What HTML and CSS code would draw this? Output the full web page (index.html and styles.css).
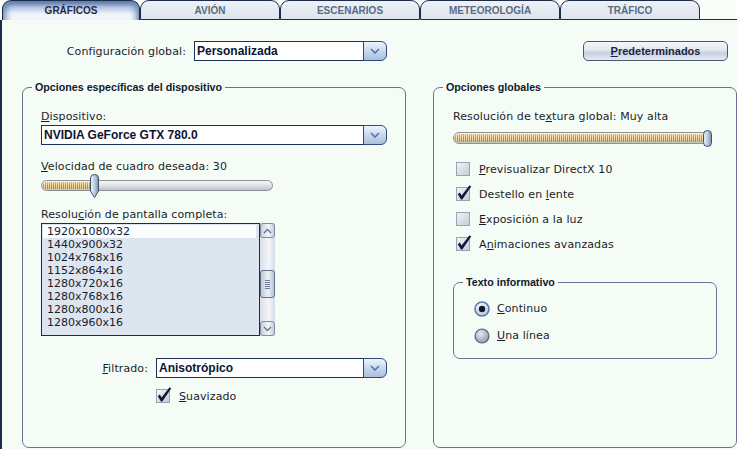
FILE: index.html
```html
<!DOCTYPE html>
<html lang="es">
<head>
    <meta charset="UTF-8">
    <title>Gráficos</title>
    <link rel="stylesheet" href="styles.css">
</head>
<body>

<div class="window">
    <!-- Tabs -->
    <div class="tabs">
        <div class="tab active">GRÁFICOS</div>
        <div class="tab">AVIÓN</div>
        <div class="tab">ESCENARIOS</div>
        <div class="tab">METEOROLOGÍA</div>
        <div class="tab">TRÁFICO</div>
        <div class="tab-fill"></div>
    </div>

    <div class="panel">
        <!-- Global config row -->
        <div class="top-row">
            <label class="top-label">Configuración <u>g</u>lobal:</label>
            <div class="combo combo-global">
                <span class="combo-value">Personalizada</span>
                <span class="combo-btn"><svg width="10" height="6" viewBox="0 0 10 6"><path d="M1 1 L5 5 L9 1" fill="none" stroke="#4d76b4" stroke-width="1.6"/></svg></span>
            </div>
            <button class="btn-default"><u>P</u>redeterminados</button>
        </div>

        <div class="groups">
            <!-- Device options -->
            <fieldset class="group group-device">
                <legend>Opciones específicas del dispositivo</legend>
                <div class="group-body">
                    <div class="field-label lbl-device"><u>D</u>ispositivo:</div>
                    <div class="combo combo-device">
                        <span class="combo-value">NVIDIA GeForce GTX 780.0</span>
                        <span class="combo-btn"><svg width="10" height="6" viewBox="0 0 10 6"><path d="M1 1 L5 5 L9 1" fill="none" stroke="#4d76b4" stroke-width="1.6"/></svg></span>
                    </div>

                    <div class="field-label lbl-fps"><u>V</u>elocidad de cuadro deseada: 30</div>
                    <div class="slider slider-fps">
                        <div class="track"><div class="track-fill" style="width: 49px"></div></div>
                        <svg class="thumb" style="left: 49px" width="9" height="24" viewBox="0 0 9 24">
                            <defs>
                                <linearGradient id="tg1" x1="0" x2="1" y1="0" y2="0">
                                    <stop offset="0" stop-color="#eef3f9"/>
                                    <stop offset="0.45" stop-color="#c5d3e4"/>
                                    <stop offset="1" stop-color="#7b90ad"/>
                                </linearGradient>
                            </defs>
                            <path d="M0.5 4 Q0.5 0.5 4.5 0.5 Q8.5 0.5 8.5 4 L8.5 17 L4.5 23.5 L0.5 17 Z" fill="url(#tg1)" stroke="#3f4f6e"/>
                        </svg>
                    </div>

                    <div class="field-label lbl-res">Resolu<u>c</u>ión de pantalla completa:</div>
                    <div class="listbox">
                        <div class="list">
                            <div class="list-item selected">1920x1080x32</div>
                            <div class="list-item">1440x900x32</div>
                            <div class="list-item">1024x768x16</div>
                            <div class="list-item">1152x864x16</div>
                            <div class="list-item">1280x720x16</div>
                            <div class="list-item">1280x768x16</div>
                            <div class="list-item">1280x800x16</div>
                            <div class="list-item">1280x960x16</div>
                        </div>
                        <div class="scrollbar">
                            <div class="sb-btn"><svg width="9" height="6" viewBox="0 0 9 6"><path d="M1 5 L4.5 1.5 L8 5" fill="none" stroke="#5f7390" stroke-width="1.3"/></svg></div>
                            <div class="sb-thumb"><span class="grip"></span></div>
                            <div class="sb-btn sb-down"><svg width="9" height="6" viewBox="0 0 9 6"><path d="M1 1 L4.5 4.5 L8 1" fill="none" stroke="#5f7390" stroke-width="1.3"/></svg></div>
                        </div>
                    </div>

                    <div class="filter-row">
                        <label class="filter-label"><u>F</u>iltrado:</label>
                        <div class="combo combo-filter">
                            <span class="combo-value">Anisotrópico</span>
                            <span class="combo-btn"><svg width="10" height="6" viewBox="0 0 10 6"><path d="M1 1 L5 5 L9 1" fill="none" stroke="#4d76b4" stroke-width="1.6"/></svg></span>
                        </div>
                    </div>

                    <div class="check-row check-aa">
                        <svg class="check" width="16" height="16" viewBox="0 0 16 16"><rect x="0.5" y="2.5" width="13" height="13" fill="url(#cb)" stroke="#9aa3b3"/><path d="M1.8 9.2 L3.8 7.6 L5.6 10.4 L13.6 0.3 L15.2 1.4 L6.3 14.6 L5 14.6 Z" fill="#0c1a38"/></svg>
                        <span><u>S</u>uavizado</span>
                    </div>
                </div>
            </fieldset>

            <!-- Global options -->
            <fieldset class="group group-global">
                <legend>Opciones globales</legend>
                <div class="group-body">
                    <div class="field-label lbl-tex">Resolución de te<u>x</u>tura global: Muy alta</div>
                    <div class="slider slider-tex">
                        <div class="track"><div class="track-fill" style="width: 250px"></div></div>
                        <svg class="thumb" style="left: 250px" width="9" height="17" viewBox="0 0 9 17">
                            <defs>
                                <linearGradient id="tg2" x1="0" x2="1" y1="0" y2="0">
                                    <stop offset="0" stop-color="#eef3f9"/>
                                    <stop offset="0.45" stop-color="#c5d3e4"/>
                                    <stop offset="1" stop-color="#7b90ad"/>
                                </linearGradient>
                            </defs>
                            <rect x="0.5" y="0.5" width="8" height="16" rx="4" fill="url(#tg2)" stroke="#3f4f6e"/>
                        </svg>
                    </div>

                    <div class="check-list">
                        <div class="check-row">
                            <svg class="check" width="16" height="16" viewBox="0 0 16 16"><rect x="0.5" y="2.5" width="13" height="13" fill="url(#cb)" stroke="#9aa3b3"/></svg>
                            <span><u>P</u>revisualizar DirectX 10</span>
                        </div>
                        <div class="check-row">
                            <svg class="check" width="16" height="16" viewBox="0 0 16 16"><rect x="0.5" y="2.5" width="13" height="13" fill="url(#cb)" stroke="#9aa3b3"/><path d="M1.8 9.2 L3.8 7.6 L5.6 10.4 L13.6 0.3 L15.2 1.4 L6.3 14.6 L5 14.6 Z" fill="#0c1a38"/></svg>
                            <span>Destello en <u>l</u>ente</span>
                        </div>
                        <div class="check-row">
                            <svg class="check" width="16" height="16" viewBox="0 0 16 16"><rect x="0.5" y="2.5" width="13" height="13" fill="url(#cb)" stroke="#9aa3b3"/></svg>
                            <span><u>E</u>xposición a la luz</span>
                        </div>
                        <div class="check-row">
                            <svg class="check" width="16" height="16" viewBox="0 0 16 16"><rect x="0.5" y="2.5" width="13" height="13" fill="url(#cb)" stroke="#9aa3b3"/><path d="M1.8 9.2 L3.8 7.6 L5.6 10.4 L13.6 0.3 L15.2 1.4 L6.3 14.6 L5 14.6 Z" fill="#0c1a38"/></svg>
                            <span>A<u>n</u>imaciones avanzadas</span>
                        </div>
                    </div>

                    <fieldset class="group group-info">
                        <legend>Texto informativo</legend>
                        <div class="group-body">
                            <div class="radio-row first">
                                <svg class="radio" width="16" height="16" viewBox="0 0 16 16"><circle cx="8" cy="8" r="7" fill="url(#rb)" stroke="#5a7cb4" stroke-width="1.6"/><circle cx="8" cy="8" r="3.2" fill="#0e1a34"/></svg>
                                <span><u>C</u>ontinuo</span>
                            </div>
                            <div class="radio-row">
                                <svg class="radio" width="16" height="16" viewBox="0 0 16 16"><circle cx="8" cy="8" r="7" fill="url(#rb2)" stroke="#55627a" stroke-width="1.2"/></svg>
                                <span><u>U</u>na línea</span>
                            </div>
                        </div>
                    </fieldset>
                </div>
            </fieldset>
        </div>
    </div>
</div>

<!-- shared gradients -->
<svg class="defs" width="0" height="0">
    <defs>
        <linearGradient id="cb" x1="0" x2="1" y1="0" y2="1">
            <stop offset="0" stop-color="#f4f6f9"/>
            <stop offset="1" stop-color="#c2cad6"/>
        </linearGradient>
        <radialGradient id="rb" cx="0.4" cy="0.35" r="0.7">
            <stop offset="0" stop-color="#ffffff"/>
            <stop offset="1" stop-color="#b4c2d6"/>
        </radialGradient>
        <radialGradient id="rb2" cx="0.4" cy="0.35" r="0.7">
            <stop offset="0" stop-color="#e6eaf0"/>
            <stop offset="1" stop-color="#8a96a8"/>
        </radialGradient>
    </defs>
</svg>

</body>
</html>
```

FILE: styles.css
```css
body {
    margin: 0;
    font-family: "DejaVu Sans", Verdana, sans-serif;
    font-size: 11px;
    letter-spacing: 0.1px;
    color: #1a1c2a;
    background: #f5fcf5;
}
u { text-decoration: underline; text-underline-offset: 1px; }

.window {
    width: 737px;
    height: 449px;
    overflow: hidden;
}

/* tabs */
.tabs {
    display: flex;
    height: 20px;
    padding-left: 2px;
    background: #fbfdfb;
}
.tab {
    box-sizing: border-box;
    width: 140px;
    height: 20px;
    border: 1px solid #1b2b4a;
    border-radius: 9px 9px 0 0;
    background: linear-gradient(#eef2f6, #dde4ec);
    color: #5a6a84;
    font: bold 10px "Liberation Sans", Arial, sans-serif;
    letter-spacing: 0;
    text-align: center;
    line-height: 19px;
}
.tab.active {
    width: 138px;
    border-bottom: none;
    color: #1c2c46;
    background: linear-gradient(#4f6fa3, #aebfdc 30%, #eaf0f9 65%, #fbfdfb);
    box-shadow: inset 6px 2px 6px -3px #6a88ba, inset -6px 2px 6px -3px #6a88ba;
}
.tab-fill {
    flex: 1;
    border-bottom: 1px solid #1b2b4a;
}

.panel {
    height: 429px;
    border-left: 2px solid #1b2b4a;
    background: #f5fcf5;
}

/* top row */
.top-row {
    display: flex;
    align-items: center;
    height: 20px;
    padding-top: 21px;
}
.top-label {
    width: 184px;
    text-align: right;
    margin-right: 8px;
}
.combo {
    display: flex;
    box-sizing: border-box;
    height: 20px;
}
.combo-value {
    flex: 1;
    border: 1px solid #1c2f56;
    background: #fff;
    font: bold 12px "Liberation Sans", Arial, sans-serif;
    letter-spacing: 0;
    color: #0b1431;
    line-height: 18px;
    padding-left: 2px;
}
.combo-btn {
    box-sizing: border-box;
    width: 24px;
    margin-left: -1px;
    border: 1px solid #2e4a7e;
    border-radius: 0 6px 6px 0;
    background: linear-gradient(#eef4fc, #c9d8ec 50%, #a9bfdc);
    display: flex;
    align-items: center;
    justify-content: center;
}
.combo-global { width: 193px; }
.btn-default {
    margin-left: auto;
    margin-right: 9px;
    width: 145px;
    height: 20px;
    border: 1px solid #4c5771;
    border-radius: 5px;
    background: linear-gradient(#f5f7fa, #e2e8f0 45%, #c6d1e0 60%, #e4eaf2);
    font: bold 11px "Liberation Sans", Arial, sans-serif;
    color: #1b2440;
    padding: 0;
}

/* group boxes */
.groups {
    display: flex;
    margin-top: 20px;
    margin-left: 20px;
    gap: 27px;
}
.group {
    box-sizing: border-box;
    margin: 0;
    min-width: 0;
    border: 1px solid #6d7096;
    border-radius: 7px;
    padding: 0;
}
.group legend {
    font: bold 10.7px "Liberation Sans", Arial, sans-serif;
    letter-spacing: 0;
    color: #0f1a2e;
    line-height: 13px;
    padding: 0 3px;
    margin-left: 9px;
}
.group-device { width: 384px; height: 367px; }
.group-device > .group-body { padding-left: 18px; }
.group-global { width: 304px; height: 367px; }
.group-global > .group-body { padding-left: 19px; }

.field-label { line-height: 13px; }
.lbl-device { margin-top: 16px; }
.combo-device { width: 346px; margin-top: 2px; }
.lbl-fps { margin-top: 15px; }
.lbl-res { margin-top: 10px; }
.lbl-tex { margin-top: 16px; }

/* sliders */
.slider {
    position: relative;
    height: 18px;
    padding-top: 6px;
    margin-top: 1px;
}
.track {
    box-sizing: border-box;
    width: 232px;
    height: 11px;
    border: 1px solid #8c8e98;
    border-radius: 6px;
    background: linear-gradient(#f6f6f6, #e2e2e4 50%, #c4c5ca);
    padding: 1px;
}
.track-fill {
    height: 7px;
    border-radius: 4px 0 0 4px;
    background:
        linear-gradient(rgba(255,255,255,0.35), rgba(0,0,0,0) 50%, rgba(120,70,0,0.15)),
        repeating-linear-gradient(90deg, #c98e30 0 1px, #f3dca8 1px 2px);
}
.thumb { position: absolute; top: 0; }
.slider-tex { height: 15px; padding-top: 2px; margin-top: 7px; }
.slider-tex .track { width: 258px; height: 12px; }
.slider-tex .track-fill { height: 8px; }

/* list */
.listbox {
    display: flex;
    margin-top: 2px;
    height: 113px;
}
.list {
    box-sizing: border-box;
    width: 219px;
    border: 1px solid #1b2b4a;
    background: #dde5ef;
    padding-top: 1px;
}
.list-item {
    font-size: 11px;
    letter-spacing: 0;
    line-height: 13px;
    padding-left: 4px;
    margin: 0 3px 0 1px;
    color: #1a1c2c;
}
.list-item.selected { background: #fcfdfe; }
.scrollbar {
    box-sizing: border-box;
    width: 15px;
    display: flex;
    flex-direction: column;
    background: linear-gradient(90deg, #d9dee6, #f3f5f8 60%, #d5dbe4);
}
.sb-btn {
    box-sizing: border-box;
    height: 15px;
    border: 1px solid #7d8aa2;
    border-radius: 3px;
    background: linear-gradient(90deg, #c7d0dc, #f4f6f9 55%, #c6cfdb);
    display: flex;
    align-items: center;
    justify-content: center;
}
.sb-thumb {
    box-sizing: border-box;
    height: 28px;
    margin-top: 32px;
    border: 1px solid #5f6f8c;
    border-radius: 3px;
    background: linear-gradient(90deg, #b9c6d8, #eef2f7 55%, #b6c3d6);
    display: flex;
    align-items: center;
    justify-content: center;
}
.grip {
    width: 5px;
    height: 9px;
    background: repeating-linear-gradient(#6f7f99 0 1px, transparent 1px 2px);
}
.sb-down { margin-top: auto; }

/* filter */
.filter-row {
    display: flex;
    align-items: center;
    margin-top: 22px;
    height: 20px;
}
.filter-label {
    width: 107px;
    margin-right: 8px;
    text-align: right;
}
.combo-filter { width: 231px; }

/* checks and radios */
.check-row {
    display: flex;
    align-items: center;
    height: 25px;
}
.check { margin-right: 7px; margin-top: -3px; }
.check-aa {
    margin-top: 8px;
    margin-left: 115px;
    height: 20px;
}
.check-list { margin-top: 10px; }
.check-list .check-row { padding-left: 3px; }

.group-info {
    width: 264px;
    height: 83px;
    margin-top: 19px;
}
.group-info > .group-body { padding-left: 20px; }
.radio-row {
    display: flex;
    align-items: center;
    height: 27px;
}
.radio-row.first { margin-top: 6px; }
.radio { margin-right: 7px; }

.defs { position: absolute; }
```
